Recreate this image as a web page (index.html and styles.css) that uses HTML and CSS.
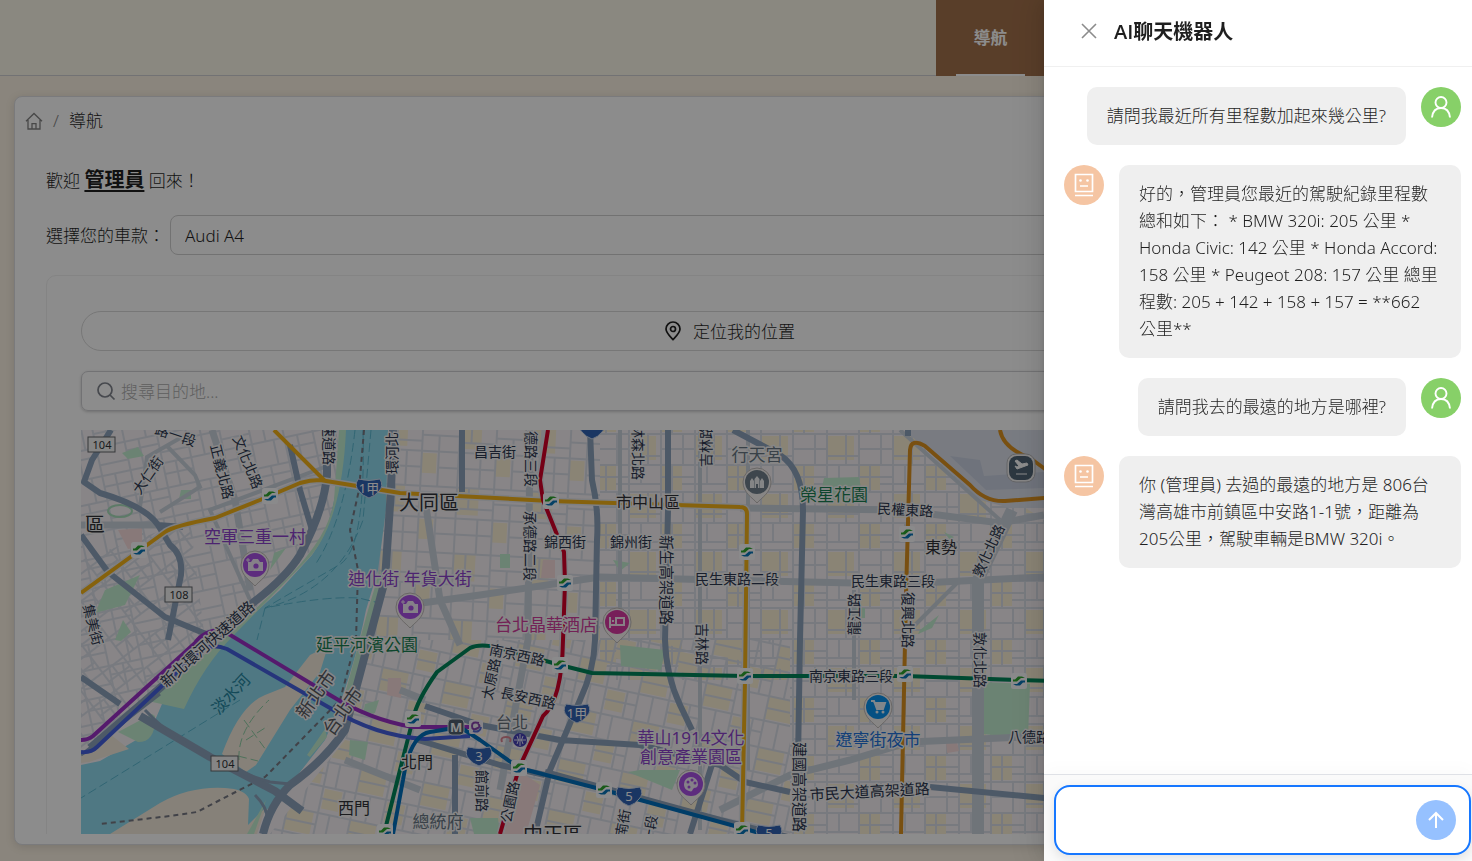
FILE: index.html
```html
<!DOCTYPE html>
<html lang="zh-Hant">
<head>
<meta charset="utf-8">
<title>導航</title>
<link rel="stylesheet" href="styles.css">
</head>
<body>
<div class="page">
  <header class="topbar">
    <nav class="topnav"><a class="topnav-item" href="#"><span class="topnav-label">導航</span></a></nav>
  </header>
  <main class="card">
    <nav class="breadcrumb">
      <a href="#" class="crumb-home" aria-label="首頁"><svg width="18" height="18" viewBox="0 0 18 18" fill="none" stroke="currentColor" stroke-width="1.3"><path d="M1 9.2 9 1.5l8 7.7M3 8v9h12V8M7 17v-5.4h4V17"/></svg></a>
      <span class="crumb-sep">/</span>
      <span>導航</span>
    </nav>
    <div class="content">
      <p class="welcome">歡迎 <strong>管理員</strong> 回來！</p>
      <div class="car-row">
        <label for="car">選擇您的車款：</label>
        <select id="car" class="car-select"><option>Audi A4</option></select>
      </div>
      <section class="panel">
        <button class="locate" type="button">
          <svg width="18" height="20" viewBox="0 0 18 20" fill="none" stroke="currentColor" stroke-width="1.7"><path d="M9 18.6C5 14.4 2 11.600 2 8a7 7 0 0 1 14 0c0 3.600-3 6.400-7 10.600Z"/><circle cx="9" cy="8" r="2.500"/></svg>
          <span>定位我的位置</span>
        </button>
        <div class="search">
          <svg width="20" height="20" viewBox="0 0 20 20" fill="none" stroke="currentColor" stroke-width="1.7"><circle cx="9" cy="9" r="7"/><path d="m14 14 4.500 4.500"/></svg>
          <input type="text" placeholder="搜尋目的地..." aria-label="搜尋目的地">
        </div>
        <div class="map">
<svg class="map-svg" viewBox="81 430 1298 404" preserveAspectRatio="xMinYMin slice">
<defs>
<pattern id="gE" width="66" height="58" patternUnits="userSpaceOnUse"><path class="blk" d="M2 2h20v24H2zM36 30h26v24H36z"/><path class="st" d="M0 1h66M0 13h34M0 28h66M22 20h44M0 43h35M35 50h31M1 0v58M12 0v28M23 28v30M35 0v58M47 0v20M54 28v30"/></pattern>
<pattern id="gM" width="74" height="66" patternUnits="userSpaceOnUse" patternTransform="rotate(3)"><path class="blk" d="M38 2h22v26H38zM2 34h14v20H2z"/><path class="st" d="M0 1h74M0 16h38M38 22h36M0 32h74M18 48h56M1 0v66M18 16v50M38 0v66M50 0v22M60 32v34"/></pattern>
<pattern id="gW" width="62" height="54" patternUnits="userSpaceOnUse" patternTransform="rotate(-12)"><path class="st" d="M0 1h62M0 12h30M0 26h62M30 35h32M0 44h30M1 0v54M14 0v26M30 0v54M44 26v28M52 0v26"/></pattern>
<pattern id="gD" width="54" height="46" patternUnits="userSpaceOnUse" patternTransform="rotate(-37)"><path class="st" d="M0 1h54M0 12h27M0 23h54M27 34h27M1 0v46M13 0v23M27 0v46M40 23v23"/></pattern>
<pattern id="gS" width="64" height="52" patternUnits="userSpaceOnUse" patternTransform="rotate(12)"><path class="blk" d="M2 2h26v22H2zM34 28h18v20H34z"/><path class="st" d="M0 1h64M0 13h32M0 26h64M32 38h32M1 0v52M16 26v26M32 0v52M44 0v26M54 26v26"/></pattern>
<g id="stn"><rect x="-8" y="-8" width="16" height="16" rx="2.500" fill="#fbfcfd"/><path d="M-6 0.500h4L2-3H6L3-4.500H-1L-4-1.500H-6Z" fill="#2fa52f"/><path d="M6-0.500H2L-2 3H-6l3 1.500H1L4 1.500H6Z" fill="#0875b8"/></g>
<g id="shield"><path d="M-11-9q11 3 22 0 4 7-1 12-4 5-10 7-6-2-10-7-5-5-1-12Z" fill="#3163b4" stroke="#cbd9ed"/></g>
<path id="pin" d="M0 21C-4 16-14 11-14 0a14 14 0 1 1 28 0C14 11 4 16 0 21Z" fill="#f8f5f3" stroke="#c0bbb9"/>
<g id="camera"><use href="#pin"/><circle r="12" fill="#a950e5"/><path d="M-7-3h3l2-3h5l2 3h3V6H-7Z" fill="#f2e9f7"/><circle cx="1" cy="1" r="2.600" fill="#a950e5"/><path d="M-7-7v4m-2-2h4" stroke="#f2e9f7"/></g>
</defs>
<rect x="81" y="430" width="1298" height="404" fill="#f8f2f6"/>
<path fill="url(#gW)" d="M81 430H340V520L225 640 81 755Z"/>
<path fill="url(#gD)" d="M81 560 190 520 205 640 81 755Z"/>
<path fill="url(#gM)" d="M390 430H600V640H370Z"/>
<path fill="url(#gE)" d="M600 430H905L1044 520H1379V834H790V680H600Z"/>
<path fill="url(#gS)" d="M370 640H790V834H270L345 740Z"/>
<path fill="#dce1ec" d="M905 430H1379V508H1010L980 500Z"/>
<path fill="#cbd2e2" d="m950 456 30 4 4 16 60-4v16l-58 2Z"/>
<g class="park"><path d="M105 590 140 575 125 605 95 613ZM115 640l8-20 8 12-10 9ZM824 478l35-1 4 22-44 2ZM982 682l48 2-2 54-46-4ZM920 630l19-15-7 13-14 6ZM620 645l45 5-4 20-40-4ZM122 453l16-6 6 9-16 3ZM181 490h10v9h-12ZM470 818h28l2 16h-26ZM613 560l17 3-10 8ZM350 740l18 2-3 18-16-5ZM365 704l14-4-4 13-12 1ZM274 553l12-5-16 22ZM640 770l40 0-8 20-44-18ZM855 608h10v10h-12ZM944 532l10 5-4 3ZM500 554h10v14h-10Z"/></g>
<path fill="#f7dcdc" d="m118 530 24-2v18l-14 3ZM543 560h12v18h-14ZM521 772 540 785 526 834H504ZM946 742h11l2 9-12 2ZM388 678h13v20l-14-3Z"/>
<ellipse cx="120" cy="511" rx="12" ry="6" class="parkline"/>
<g class="majors"><path d="M530 430 528 640 500 790M400 606 480 595 600 577 720 580 900 584 1044 577 1200 575M740 508 900 510 1000 523 1044 515M81 525H160M212 430 235 500 250 590M425 500 440 600 460 645M400 690 425 700M345 760 420 790M720 810 790 775 850 760 910 742 1044 736"/><path stroke-width="12" d="M978 834V580L1012 510"/><path stroke-width="4" d="M748 770V430M854 590V700M166 445 195 475 200 487 160 512M250 600l-40-90 120-45M140 507l7-50 35-20M700 430v400M620 430v210M900 430 1000 520M960 580 900 640"/></g>
<path fill="#90daee" d="M340 430 338 470Q334 525 312 555L280 590 220 645 195 680 162 704 150 732 100 761 81 765V834H248L262 815 290 785 325 740Q352 680 366 610L378 570 386 510 388 430Z"/>
<g fill="#f4ebdd"><path d="M110 834 160 803Q190 786 225 788 245 789 249 799L248 825 266 807 257 834ZM222 754Q240 705 265 695L285 687 310 655 328 646 320 672 290 710 256 765 246 772ZM81 755l30-20 18 14-40 13-8 1Z"/></g>
<g class="park"><path d="M339 430h7q-4 90-36 127L232 637q-28 28-48 72l-36-8 77-63 50-48q54-50 59-90ZM152 714l-34 18 20 10q18 0 17-26ZM380 570l3 15-18 60-15 53-4-8 22-80ZM327 737l-2-8-18 26 3 2ZM266 800l-12 34h-7Z"/></g>
<g class="ferry"><path d="M363 430q3 120-24 135L265 608M355 430q-10 90-40 135M371 430l-8 90q-25 70-98 88 60-12 94-10l20 5M240 700 81 798M265 608l-8 32"/><path class="trail" d="M239 760q-2-30 30-60m-25 20 22 30m-20-10 22-14m-30 30 20 5"/></g>
<path class="border" d="M364 430 359 490 350 530 358 570 356 640 340 700 272 770 265 777 220 800 197 812 170 816 100 824"/>
<g class="hw"><path d="M111 430 92 460 84 482 100 493Q145 506 158 525L170 545Q183 555 181 575L168 640M81 535 108 572 165 617 206 634M290 445 300 490 312 530M462 430V492M590 430 592 480Q599 510 597 540L595 640Q594 670 580 700L550 770 535 834M668 430V510L665 640Q666 675 680 705L692 730M733 430 780 455Q803 470 803 510L800 640 798 760M425 706 480 725 560 740 640 745 720 765 745 782 790 792M930 787 1044 798 1200 808M81 677 120 704M455 755V834M418 740 500 765 545 775M908 430V436M715 755 690 834M158 525l25 2M545 772 720 820 800 840"/><path stroke-width="8" d="M327 430V475Q324 510 300 555 286 578 250 605L210 642 160 688 90 748M393 430 391 490 385 580Q362 665 345 730 325 760 290 785 270 805 263 834M140 716 210 757 275 791 302 811"/></g>
<path class="hwline" d="M145 710Q190 758 270 782L290 784M255 795q20 20 8 40M81 755 160 694"/>
<g class="lines">
<path class="casing" d="M81 593 165 532Q173 526 215 518L260 500 300 483Q310 480 320 480L400 493 550 501 740 507Q747 507 747 514L745 680 742 834M545 430 540 480 543 500 564 552 565 583 563 640 559 690 543 716 519 768 500 834"/>
<path stroke="#f5b318" d="M274 430 325 481M81 593 165 532Q173 526 215 518L260 500 300 483Q310 480 320 480L400 493 550 501 740 507Q747 507 747 514L745 680 742 834"/>
<path stroke="#dc9220" d="M901 834 906 595 910 450Q911 438 925 446L970 485Q985 502 1005 501L1044 498 1100 495M1000 430Q1003 448 1030 458L1060 480"/>
<path stroke="#d50028" d="M548 430 540 480 543 500 564 552 565 583 563 640Q562 700 543 716L519 768 500 834"/>
<path stroke="#008659" d="M384 834 400 770 413 719Q417 700 437 672L470 648Q480 643 500 648L560 665 592 673 745 676 905 676 1018 680 1200 685"/>
<path stroke="#9c30c6" d="M81 740Q88 740 93 736L195 643Q204 630 222 630L330 695Q370 720 413 727H475"/>
<path stroke="#4562e0" d="M81 752Q91 753 97 747L200 650Q213 643 227 649L330 708Q375 736 425 739L470 736"/>
<path stroke="#0070bd" d="M393 834 403 780Q410 735 430 732L460 727 480 740 519 768 604 790 742 828 800 845"/>
</g>
<g><use href="#stn" x="270" y="496"/><use href="#stn" x="139" y="550"/><use href="#stn" x="551" y="501"/><use href="#stn" x="565" y="583"/><use href="#stn" x="747" y="552"/><use href="#stn" x="907" y="534"/><use href="#stn" x="560" y="665"/><use href="#stn" x="745" y="676"/><use href="#stn" x="905" y="674"/><use href="#stn" x="1019" y="681"/><use href="#stn" x="413" y="719"/><use href="#stn" x="519" y="768"/><use href="#stn" x="604" y="790"/><use href="#stn" x="742" y="830"/><use href="#stn" x="385" y="832"/></g>
<g class="shields"><use href="#shield" x="369" y="488"/><use href="#shield" x="577" y="713"/><use href="#shield" x="479" y="756"/><use href="#shield" x="629" y="796"/><use href="#shield" x="769" y="834"/><use href="#shield" x="592" y="429"/><text x="369" y="493">1甲</text><text x="577" y="718">1甲</text><text x="479" y="761">3</text><text x="629" y="801">5</text><text x="769" y="838">5</text></g>
<g class="routes"><rect x="88" y="437" width="27" height="15"/><rect x="165" y="587" width="27" height="15"/><rect x="211" y="756" width="27" height="15"/><text x="102" y="449">104</text><text x="179" y="599">108</text><text x="225" y="768">104</text></g>
<g class="lbl road">
<text transform="translate(397 453) rotate(-90)">環河北</text><text transform="translate(324 444) rotate(90)">速道路</text><text transform="translate(152 478) rotate(-55)">大仁街</text><text transform="translate(217 473) rotate(76)">正義北路</text><text transform="translate(243 464) rotate(68)">文化北路</text><text transform="translate(174 440) rotate(18)">路一段</text><text transform="translate(88 626) rotate(75)">集美街</text>
<text x="495" y="457">昌吉街</text><text transform="translate(526 452) rotate(90)">承德路三段</text><text transform="translate(525 546) rotate(90)">承德路二段</text><text transform="translate(633 452) rotate(90)">林森北路</text><text transform="translate(711 446) rotate(-90)">吉林路</text><text x="565" y="547">錦西街</text><text x="631" y="547">錦州街</text><text transform="translate(661 580) rotate(90)" class="r15">新生高架道路</text><text x="737" y="584">民生東路二段</text><text transform="translate(697 644) rotate(90)">吉林路</text><text transform="translate(905 515) rotate(3)">民權東路</text><text transform="translate(993 553) rotate(-65)">敦化北路</text><text x="893" y="586">民生東路三段</text><text transform="translate(859 614) rotate(-90)">龍江路</text><text transform="translate(903 620) rotate(90)">復興北路</text><text transform="translate(975 660) rotate(90)">敦化北路</text><text transform="translate(516 660) rotate(12)">南京西路</text><text transform="translate(496 680) rotate(-78)">太原路</text><text transform="translate(527 703) rotate(12)">長安西路</text><text transform="translate(477 791) rotate(90)">館前路</text><text transform="translate(515 803) rotate(-78)">公園路</text><text transform="translate(628 824) rotate(-80)">南街</text><text transform="translate(655 830) rotate(-80)">一段</text><text x="851" y="681">南京東路三段</text><text x="1029" y="742">八德路</text><text transform="translate(794 787) rotate(90)" class="r15">建國高架道路</text><text transform="translate(870 797) rotate(-3)" class="r15">市民大道高架道路</text><text transform="translate(211 648) rotate(-42)" class="r15">新北環河快速道路</text>
</g>
<g class="lbl area"><text x="648" y="508">市中山區</text><text x="941" y="553">東勢</text><text x="417" y="768">北門</text><text x="354" y="814">西門</text><text x="512" y="728" fill="#68717a">台北</text><text class="big" x="429" y="510">大同區</text><text class="big" x="95" y="532">區</text><text class="big" x="553" y="842">中正區</text><text transform="translate(321 698) rotate(-55)" class="city">新北市</text><text transform="translate(348 715) rotate(-55)" class="city">台北市</text></g>
<text class="river" transform="translate(235 698) rotate(-47)">淡水河</text>
<g class="lbl poi"><g fill="#8d43cc"><text x="255" y="543">空軍三重一村</text><text x="410" y="585">迪化街 年貨大街</text><text x="691" y="744">華山1914文化</text><text x="691" y="763">創意產業園區</text></g><g fill="#d13c9d"><text x="546" y="631">台北晶華酒店</text></g><g fill="#188052"><text x="367" y="651">延平河濱公園</text><text x="834" y="501">榮星花園</text></g><g fill="#687784"><text x="757" y="461">行天宮</text><text x="438" y="828">總統府</text></g><text x="878" y="746" fill="#2474db">遼寧街夜市</text></g>
<use href="#camera" x="255" y="565"/><use href="#camera" x="410" y="607"/>
<g transform="translate(617 622)"><use href="#pin"/><circle r="12" fill="#d93aa2"/><path d="M-7-5V6M-7 3H7V-4H-1V3M-5-1h2" stroke="#f7e9f3" stroke-width="2" fill="none"/></g>
<g transform="translate(757 482)"><use href="#pin"/><circle r="12" fill="#71808c"/><path d="M-7 6v-7l2-3 2 3V6ZM3 6v-7l2-3 2 3v7ZM-2.500 6V-3L0-6l2.500 3v9H1V2h-2v4Z" fill="#f0f2f4"/></g>
<g transform="translate(691 784)"><use href="#pin"/><circle r="12" fill="#a950e5"/><path d="M-7 0a7 7 0 0 1 14 0c0 5-4 3-5 5s-1 3-4 2-5-3-5-7Z" fill="#f2e9f7"/><g fill="#a950e5"><circle cx="-3" cy="-2" r="1.500"/><circle cx="1" cy="-4" r="1.500"/><circle cx="4" cy="-1" r="1.500"/><circle cx="-2" cy="3" r="1.500"/></g></g>
<g transform="translate(878 707)"><use href="#pin"/><circle r="12" fill="#0892ef"/><path d="M-7-6h3l3 8h6l2-6H-3" stroke="#eaf5fd" stroke-width="2" fill="#eaf5fd"/><g fill="#eaf5fd"><circle cx="-1" cy="5" r="1.500"/><circle cx="5" cy="5" r="1.500"/></g></g>
<g transform="translate(1021 468)"><rect x="-14" y="-14" width="28" height="28" rx="9" fill="#f4f3f3" stroke="#b7b7bb"/><rect x="-12" y="-12" width="24" height="24" rx="8" fill="#526576"/><path d="m-6-2 2 3L7-3 6-5 1-4-4-8l-2 1 4 5-2 1ZM-5 6H6" fill="#fff" stroke="#fff"/></g>
<g transform="translate(456 727)"><rect x="-8" y="-8" width="16" height="16" rx="4" fill="#526272" stroke="#dce2e8"/><text class="metro" y="5">M</text></g>
<g transform="translate(476 727)" fill="none" stroke-width="2"><rect x="-7" y="-7" width="14" height="14" rx="2" fill="#f3eef6"/><path d="M3-4q-7-2-7 3t6 2q3-2 0-4" stroke="#8744ae"/><path d="M-3 4q7 2 8-4" stroke="#546bd0"/></g>
<g transform="translate(520 740)"><circle r="7" fill="#4541b5"/><path d="M-6 0H6M0-6V6M-3-4q3 4 0 8M3-4q-3 4 0 8" stroke="#e5e5fa" fill="none"/></g><path d="M502 742q-2-5 4-5t4 5" stroke="#da8390" fill="none" stroke-width="2"/>
</svg>
        </div>
      </section>
    </div>
  </main>
</div>
<div class="mask"></div>
<aside class="drawer" aria-label="AI聊天機器人">
  <header class="drawer-head">
    <button class="close" type="button" aria-label="關閉"><svg width="18" height="18" viewBox="0 0 18 18" fill="none" stroke="currentColor" stroke-width="1.6"><path d="m2 2 14 14M16 2 2 16"/></svg></button>
    <h2>AI聊天機器人</h2>
  </header>
  <div class="messages">
    <div class="msg msg-user"><p class="bubble">請問我最近所有里程數加起來幾公里?</p><span class="avatar"><svg width="22" height="24" viewBox="0 0 22 24" fill="none" stroke="currentColor" stroke-width="1.900"><circle cx="11" cy="7.500" r="5.500"/><path d="M2 22.500q1-9.500 9-9.500t9 9.500"/></svg></span></div>
    <div class="msg msg-bot"><span class="avatar"><svg width="20" height="24" viewBox="0 0 20 24" fill="none" stroke="currentColor" stroke-width="1.700"><path d="M1.500 1.500h17v17h-17ZM6 13h8M1 22.500h18"/><circle cx="6.500" cy="7.500" r="1.300" fill="currentColor" stroke="none"/><circle cx="13.500" cy="7.500" r="1.300" fill="currentColor" stroke="none"/></svg></span><p class="bubble">好的，管理員您最近的駕駛紀錄里程數<br>總和如下： * BMW 320i: 205 公里 *<br>Honda Civic: 142 公里 * Honda Accord:<br>158 公里 * Peugeot 208: 157 公里 總里<br>程數: 205 + 142 + 158 + 157 = **662<br>公里**</p></div>
    <div class="msg msg-user"><p class="bubble">請問我去的最遠的地方是哪裡?</p><span class="avatar"><svg width="22" height="24" viewBox="0 0 22 24" fill="none" stroke="currentColor" stroke-width="1.900"><circle cx="11" cy="7.500" r="5.500"/><path d="M2 22.500q1-9.500 9-9.500t9 9.500"/></svg></span></div>
    <div class="msg msg-bot"><span class="avatar"><svg width="20" height="24" viewBox="0 0 20 24" fill="none" stroke="currentColor" stroke-width="1.700"><path d="M1.500 1.500h17v17h-17ZM6 13h8M1 22.500h18"/><circle cx="6.500" cy="7.500" r="1.300" fill="currentColor" stroke="none"/><circle cx="13.500" cy="7.500" r="1.300" fill="currentColor" stroke="none"/></svg></span><p class="bubble">你 (管理員) 去過的最遠的地方是 806台<br>灣高雄市前鎮區中安路1-1號，距離為<br>205公里，駕駛車輛是BMW 320i。</p></div>
  </div>
  <form class="composer">
    <div class="composer-box">
      <input type="text" aria-label="輸入訊息">
      <button type="button" class="send" aria-label="送出"><svg width="18" height="18" viewBox="0 0 18 18" fill="none" stroke="currentColor" stroke-width="2"><path d="M9 17V2M2 9l7-7 7 7"/></svg></button>
    </div>
  </form>
</aside>
</body>
</html>
```
FILE: styles.css
```css
* { box-sizing: border-box; }
body {
  margin: 0;
  font-family: "Noto Sans", "Noto Sans CJK TC", sans-serif;
  font-size: 17px;
  font-weight: 300;
  line-height: 27px;
  color: #1f1f1f;
  background: #fbf2e3;
  overflow: hidden;
}
button, input, select { font: inherit; color: inherit; }
p, h2 { margin: 0; }
a { color: inherit; text-decoration: none; }
svg { display: block; flex: none; }

.page { display: flex; flex-direction: column; height: 100vh; }
.topbar {
  display: flex;
  justify-content: flex-end;
  height: 76px;
  flex: none;
  padding-right: 427px;
  background: #fcf7ea;
  border-bottom: 1px solid #d0d0d3;
}
.topnav { display: flex; margin-bottom: -1px; }
.topnav-item {
  display: flex;
  width: 109px;
  padding: 0 20px;
  background: #a3714b;
  color: #fff;
  font-weight: 700;
}
.topnav-label {
  display: flex;
  flex: 1;
  align-items: center;
  justify-content: center;
  border-bottom: 2px solid #fff;
}
.card {
  display: flex;
  flex-direction: column;
  flex: 1;
  min-height: 0;
  margin: 20px 27px 16px 14px;
  padding: 10px;
  background: #fff;
  border: 1px solid #dedfe2;
  border-radius: 8px;
  box-shadow: 0 2px 10px rgba(0, 0, 0, .12);
}
.breadcrumb { display: flex; align-items: center; gap: 10px; flex: none; }
.crumb-home, .crumb-sep { color: #848484; }
.content { flex: 1; min-height: 0; padding: 32px 21px 0; overflow: hidden; }
.welcome strong { font-size: 20px; font-weight: 700; text-decoration: underline; text-underline-offset: 3px; text-decoration-thickness: 2px; }
.car-row { display: flex; align-items: center; gap: 5px; margin-top: 21px; }
.car-select {
  flex: 1;
  height: 40px;
  padding: 0 14px;
  appearance: none;
  background: #fff;
  border: 1px solid #d0d0d0;
  border-radius: 8px;
}
.panel {
  margin-top: 20px;
  padding: 35px 34px;
  border: 1px solid #f0f0f0;
  border-radius: 10px;
}
.locate {
  display: flex;
  align-items: center;
  justify-content: center;
  gap: 11px;
  width: 100%;
  height: 40px;
  background: #fff;
  border: 1px solid #d9d9d9;
  border-radius: 20px;
}
.search {
  display: flex;
  align-items: center;
  gap: 5px;
  height: 40px;
  margin: 20px 0 19px;
  padding: 0 14px;
  color: #81858e;
  border: 1px solid #d0d0d3;
  border-radius: 7px;
  box-shadow: 0 1px 3px rgba(0, 0, 0, .2);
}
.search input { flex: 1; min-width: 0; padding: 0; border: 0; outline: 0; background: none; }
.search input::placeholder { color: #aeaeae; opacity: 1; }

.map { height: 404px; overflow: hidden; }
.map-svg { width: 100%; height: 404px; }
.blk { fill: #fbf0d5; }
.st { stroke: #dadfe8; stroke-width: 2; fill: none; }
.park { fill: #c4efd1; }
.parkline { fill: none; stroke: #aadfbc; stroke-width: 2; }
.majors { fill: none; stroke: #cbd3dd; stroke-width: 7; }
.ferry { fill: none; stroke: #5ab9d2; stroke-width: 1; stroke-dasharray: 9 4; }
.trail { stroke: #8fcfa5; }
.border { fill: none; stroke: #777983; stroke-width: 2; stroke-dasharray: 5 4; }
.hw { fill: none; stroke: #8ca3bc; stroke-width: 6; stroke-linejoin: round; }
.hwline { fill: none; stroke: #8ca3bc; stroke-width: 3; }
.lines { fill: none; stroke-width: 4; stroke-linejoin: round; }
.casing { stroke: #e4e7ed; stroke-width: 7; }
.shields text { font-size: 13px; fill: #fff; text-anchor: middle; font-weight: 400; }
.routes rect { fill: #f3f3f3; stroke: #62666b; stroke-width: 1; }
.routes text { font-size: 11px; fill: #303438; text-anchor: middle; font-weight: 400; }
.lbl { text-anchor: middle; paint-order: stroke; stroke: #f5f4f5; stroke-width: 3px; stroke-linejoin: round; font-weight: 400; }
.road { font-size: 14px; fill: #2d3850; }
.r15 { font-size: 15px; }
.area { font-size: 16px; fill: #303238; }
.big { font-size: 20px; }
.city { fill: #595b62; font-size: 18px; }
.poi { font-size: 17px; }
.river { font-size: 16px; fill: #2385a0; text-anchor: middle; font-weight: 400; }
.metro { font-size: 13px; font-weight: 700; fill: #fff; text-anchor: middle; }

.mask { position: fixed; inset: 0; background: rgba(0, 0, 0, .45); }
.drawer {
  position: fixed;
  top: 0;
  right: 0;
  bottom: 0;
  display: flex;
  flex-direction: column;
  width: 428px;
  background: #fff;
  box-shadow: -6px 0 16px rgba(0, 0, 0, .08), -3px 0 6px -4px rgba(0, 0, 0, .12), -9px 0 28px 8px rgba(0, 0, 0, .05);
}
.drawer-head {
  display: flex;
  align-items: center;
  gap: 16px;
  flex: none;
  height: 67px;
  padding: 0 36px 4px;
  border-bottom: 1px solid #f0f0f0;
}
.drawer-head h2 { font-family: "Open Sans", "Noto Sans CJK TC", sans-serif; font-size: 20px; font-weight: 600; }
.close { padding: 0; border: 0; background: none; color: #8c8c8c; }
.messages {
  display: flex;
  flex-direction: column;
  gap: 20px;
  flex: 1;
  min-height: 0;
  padding: 20px 11px 20px 20px;
  overflow: hidden;
}
.msg { display: flex; gap: 15px; align-items: flex-start; }
.msg-user { justify-content: flex-end; }
.bubble {
  padding: 15px 20px 16px;
  background: #efefef;
  border-radius: 10px;
  white-space: nowrap;
}
.msg-bot .bubble { flex: 1; min-width: 0; }
.avatar {
  display: flex;
  align-items: center;
  justify-content: center;
  flex: none;
  width: 40px;
  height: 40px;
  border-radius: 50%;
  color: #fff;
}
.msg-user .avatar { background: #87d068; }
.msg-bot .avatar { background: #f5c5a3; }
.composer {
  flex: none;
  padding: 10px 1px 6px 10px;
  background: #fafafa;
  border-top: 1px solid #dfe1e6;
  box-shadow: 0 -6px 16px rgba(0, 0, 0, .02);
}
.composer-box {
  display: flex;
  align-items: center;
  height: 70px;
  padding: 0 13px;
  background: #fff;
  border: 2px solid #1677ff;
  border-radius: 16px;
  box-shadow: 0 4px 12px rgba(0, 0, 0, .1);
}
.composer-box input { flex: 1; min-width: 0; height: 40px; padding: 0 8px; border: 0; outline: 0; background: none; }
.send {
  display: flex;
  align-items: center;
  justify-content: center;
  width: 40px;
  height: 40px;
  padding: 0;
  border: 0;
  border-radius: 50%;
  background: #96c1ff;
  color: #fff;
}
```
